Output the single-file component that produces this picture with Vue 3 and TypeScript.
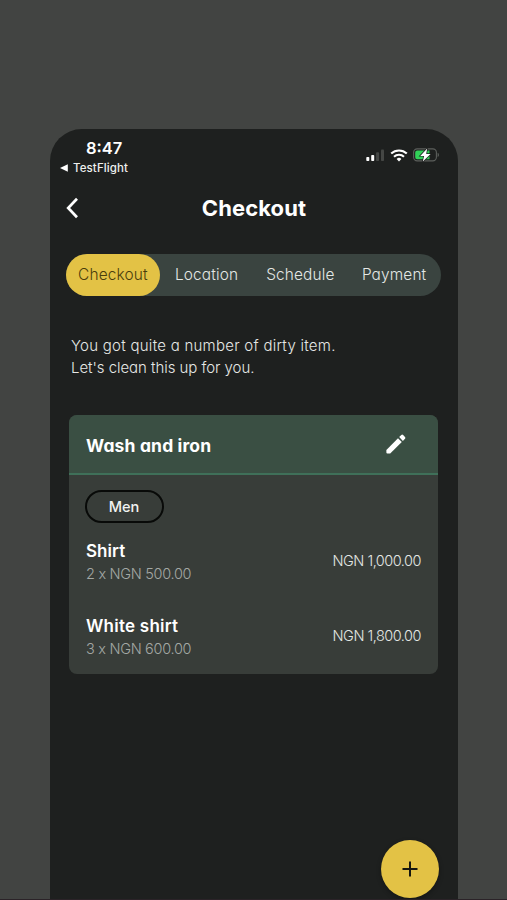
<script setup lang="ts">
interface Tab { label: string; active?: boolean }
interface Item { name: string; detail: string; total: string; cls: string }

const tabs: Tab[] = [
  { label: 'Checkout', active: true },
  { label: 'Location' },
  { label: 'Schedule' },
  { label: 'Payment' },
]
const items: Item[] = [
  { name: 'Shirt', detail: '2 x NGN 500.00', total: 'NGN 1,000.00', cls: 'n-shirt' },
  { name: 'White shirt', detail: '3 x NGN 600.00', total: 'NGN 1,800.00', cls: 'n-white' },
]
</script>

<template>
  <div class="page">
    <main class="phone">
      <div class="status">
        <div class="clock">
          <span class="time">8:47</span>
          <span class="back-app">
            <svg width="8" height="8" viewBox="0 0 8 8"><path d="M7.8 0.300v7.400L0 4z" fill="#fff" /></svg>
            <span>TestFlight</span>
          </span>
        </div>
        <div class="indicators">
          <svg width="19" height="13" viewBox="0 0 19 13">
            <rect x="0.3" y="8" width="3" height="4" rx="0.8" fill="#fff" />
            <rect x="5.2" y="6" width="3" height="6" rx="0.8" fill="#fff" />
            <rect x="10.1" y="3.2" width="3" height="8.8" rx="0.8" fill="#454745" />
            <rect x="15" y="0.6" width="3" height="11.4" rx="0.8" fill="#454745" />
          </svg>
          <svg class="wifi" width="18" height="13" viewBox="0 0 18 13" fill="none" stroke="#fff">
            <path d="M1.2 4.6a11.2 11.2 0 0 1 15.6 0" stroke-width="2.1" />
            <path d="M4 7.7a7.1 7.1 0 0 1 10 0" stroke-width="2" />
            <path d="M9 12.5L6.600 10a3.500 3.500 0 0 1 4.800 0z" fill="#fff" stroke="none" />
          </svg>
          <svg class="battery" width="27" height="14" viewBox="0 0 27 14">
            <rect x="0.6" y="0.9" width="22.8" height="12" rx="3.6" fill="none" stroke="#5c5f5c" stroke-width="1.1" />
            <path d="M4.200 2.600h12.300v8.600H4.200a2 2 0 0 1-2-2V4.600a2 2 0 0 1 2-2z" fill="#31d158" />
            <path d="M24.600 4.800a2.300 2.300 0 0 1 0 4.200z" fill="#5c5f5c" />
            <path d="M14.200 0.600L7.200 7.900h3.900L9.800 13.400 17.600 5.900h-4.400z" fill="#fff" stroke="#1e201f" stroke-width="1.400" paint-order="stroke" />
          </svg>
        </div>
      </div>

      <header class="topbar">
        <svg class="back" width="14" height="22" viewBox="0 0 14 22"><path d="M12 1.800L3.200 11l8.800 9.200" fill="none" stroke="#fff" stroke-width="2.700" /></svg>
        <h1>Checkout</h1>
      </header>

      <nav class="tabs">
        <div v-for="tab in tabs" :key="tab.label" class="tab" :class="{ active: tab.active }">
          <span>{{ tab.label }}</span>
        </div>
      </nav>

      <p class="intro"><span class="line-a">You got quite a number of dirty item.</span><br /><span class="line-b">Let's clean this up for you.</span></p>

      <section class="card">
        <div class="card-head">
          <h2>Wash and iron</h2>
          <svg width="20" height="20" viewBox="0 0 20 20" fill="#fff">
            <path d="M0.400 15.900L12 4.300l3.800 3.800L4.200 19.600H1.400q-1 0-1-1z" />
            <path d="M13.200 3.100L15.300 1q0.900-0.900 1.800 0l1.900 1.900q0.900 0.900 0 1.800L16.900 6.900z" />
          </svg>
        </div>
        <div class="card-body">
          <div class="chip"><span>Men</span></div>
          <div v-for="item in items" :key="item.name" class="item">
            <div class="info">
              <span class="name" :class="item.cls">{{ item.name }}</span>
              <span class="detail">{{ item.detail }}</span>
            </div>
            <span class="total">{{ item.total }}</span>
          </div>
        </div>
      </section>

      <button class="fab" aria-label="Add item">
        <svg width="16" height="16" viewBox="0 0 16 16"><path d="M8 0.500v15M0.500 8h15" stroke="#15170f" stroke-width="2" /></svg>
      </button>
    </main>
  </div>
</template>

<style>
body { background: #424442; }
</style>

<style scoped>
* { box-sizing: border-box; }
.page {
  height: 900px;
  overflow: hidden;
  padding: 129px 49px 0 50px;
  background: #424442;
  border-bottom: 1px solid #2b2328;
  font-family: Inter, 'Liberation Sans', sans-serif;
  font-feature-settings: 'cv11' 1;
  color: #fff;
}
.phone {
  position: relative;
  height: 770px;
  background: #1e201f;
  border-radius: 32px 32px 0 0;
}
.status { display: flex; justify-content: space-between; height: 54px; padding: 9px 18px 0 10px; }
.clock { display: flex; flex-direction: column; }
.time { font-size: 16.500px; line-height: 20px; font-weight: 600; padding-left: 26px; }
.back-app { display: flex; align-items: center; gap: 5px; font-size: 11.500px; line-height: 20px; font-weight: 500; letter-spacing: 0.100px; color: #eeefee; }
.indicators { display: flex; align-items: center; height: 14px; margin-top: 10px; }
.wifi { margin-left: 5px; }
.battery { margin-left: 5px; }
.topbar { display: flex; align-items: center; height: 50px; padding: 0 15px; }
.topbar h1 { flex: 1; margin: -1px 14px 0 0; text-align: center; font-size: 22px; line-height: 30px; font-weight: 700; letter-spacing: 0.100px; }
.tabs { display: flex; margin: 21px 17px 0 16px; height: 42px; border-radius: 21px; background: #3a4440; font-size: 15.400px; font-weight: 300; letter-spacing: 0.150px; color: #e4e8e5; }
.tab { flex: 1; display: flex; align-items: center; justify-content: center; padding-bottom: 2px; border-radius: 21px; white-space: nowrap; }
.tab.active { background: #e3c245; color: #4a3d0c; }
.intro { margin: 39px 20px 0 21px; font-size: 15px; line-height: 22px; font-weight: 300; color: #e6e8e6; white-space: nowrap; }
.line-a { letter-spacing: 0.260px; }
.line-b { letter-spacing: -0.050px; }
.card { margin: 36px 20px 0 19px; height: 259px; border-radius: 8px; overflow: hidden; background: #383d39; }
.card-head { display: flex; align-items: center; justify-content: space-between; height: 60px; padding: 0 32px 0 17px; background: #3a4f43; border-bottom: 2px solid #3f7059; }
.card-head h2 { margin: 2px 0 0; font-size: 17.500px; font-weight: 700; letter-spacing: 0.150px; }
.card-body { padding: 15px 17px 0 16px; }
.chip { display: flex; align-items: center; justify-content: center; width: 79px; height: 33px; padding: 0 1px 0 0; border: 2px solid #080a08; border-radius: 17px; font-size: 14.600px; font-weight: 500; color: #f0f2f0; }
.item { display: flex; align-items: center; justify-content: space-between; height: 75px; padding-left: 1px; }
.info { display: flex; flex-direction: column; padding-top: 2px; }
.name { font-size: 17px; line-height: 24px; font-weight: 600; }
.n-shirt { letter-spacing: 0.050px; }
.n-white { letter-spacing: 0.250px; }
.detail { font-size: 14.500px; line-height: 22px; font-weight: 300; letter-spacing: -0.300px; color: #a3a8a4; }
.total { font-size: 14.500px; font-weight: 300; letter-spacing: -0.500px; color: #e3e7e4; }
.fab { position: absolute; right: 19px; bottom: 1px; display: grid; place-items: center; width: 58px; height: 58px; padding: 0; border: 0; border-radius: 50%; background: #e3c245; box-shadow: 0 2px 5px rgba(0, 0, 0, 0.3); }
</style>
